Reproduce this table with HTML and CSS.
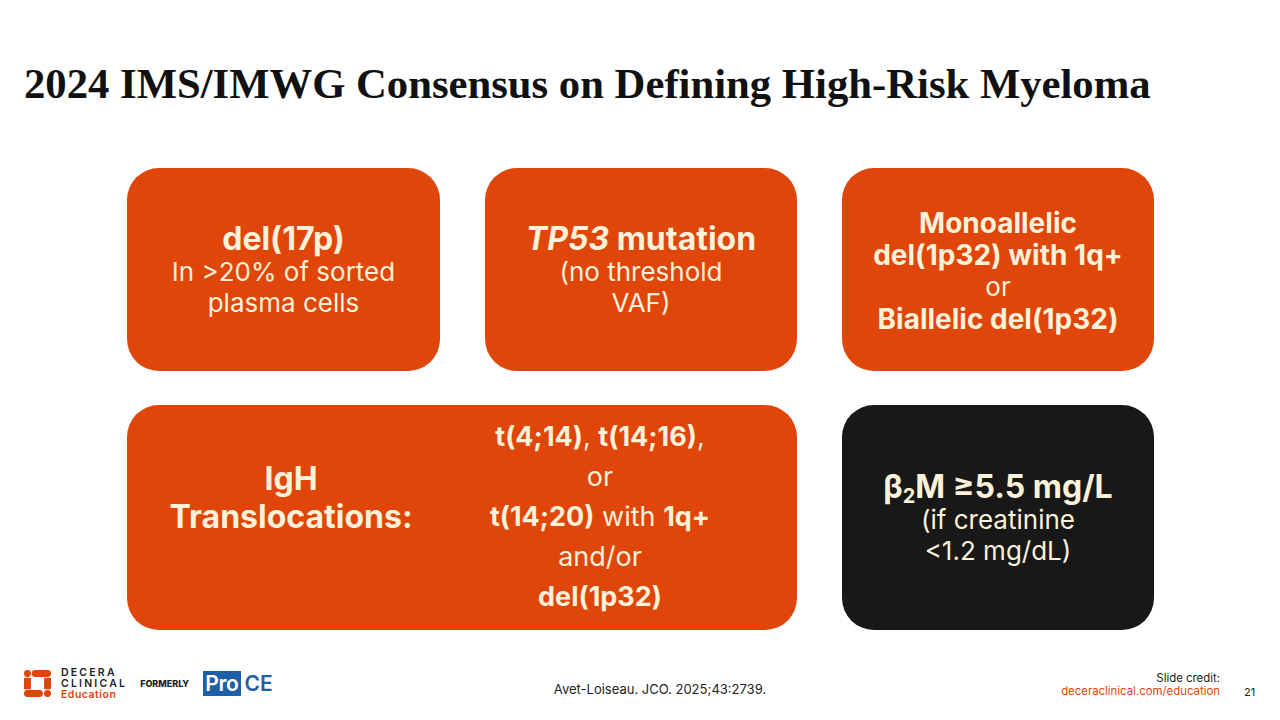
FILE: index.html
```html
<!DOCTYPE html>
<html lang="en">
<head>
<meta charset="utf-8">
<title>2024 IMS/IMWG Consensus on Defining High-Risk Myeloma</title>
<link rel="stylesheet" href="styles.css">
</head>
<body>
<div class="slide">
  <h1 class="title">2024 IMS/IMWG Consensus on Defining High-Risk Myeloma</h1>
  <div class="grid">
    <div class="card orange">
      <div class="big b">del(17p)</div>
      <div class="txt">In &gt;20% of sorted<br>plasma cells</div>
    </div>
    <div class="card orange">
      <div class="big b"><i>TP53</i> mutation</div>
      <div class="txt">(no threshold<br>VAF)</div>
    </div>
    <div class="card orange c3">
      <div class="mid b">Monoallelic</div>
      <div class="mid b">del(1p32) with 1q+</div>
      <div class="mid or">or</div>
      <div class="mid b">Biallelic del(1p32)</div>
    </div>
    <div class="card orange wide">
      <div class="igh big b">IgH<br>Translocations:</div>
      <div class="trans">
        <div><b>t(4;14)</b>, <b>t(14;16)</b>,</div>
        <div>or</div>
        <div><b>t(14;20)</b> with <b>1q+</b></div>
        <div>and/or</div>
        <div><b>del(1p32)</b></div>
      </div>
    </div>
    <div class="card dark">
      <div class="big b">β<sub>2</sub>M ≥5.5 mg/L</div>
      <div class="txt">(if creatinine<br>&lt;1.2 mg/dL)</div>
    </div>
  </div>
  <div class="footer">
    <div class="logos">
      <div class="decera">
        <svg class="mark" viewBox="0 0 28 28" width="27" height="27" aria-hidden="true">
          <circle cx="3.6" cy="3.6" r="3.6" fill="#E0450A"/>
          <rect x="8" y="0" width="20" height="7.2" rx="3.6" fill="#E0450A"/>
          <rect x="0" y="8" width="7.2" height="12" rx="1" fill="#E0450A"/>
          <rect x="20.8" y="8" width="7.2" height="12" rx="1" fill="#E0450A"/>
          <rect x="0" y="20.8" width="19.6" height="7.2" rx="3.6" fill="#E0450A"/>
          <circle cx="24.4" cy="24.4" r="3.6" fill="#E0450A"/>
        </svg>
        <div class="dtext">
          <span>DECERA</span>
          <span>CLINICAL</span>
          <span class="edu">Education</span>
        </div>
      </div>
      <span class="formerly">FORMERLY</span>
      <div class="proce"><span class="pro">Pro</span><span class="ce">CE</span></div>
    </div>
    <div class="cite">Avet-Loiseau. JCO. 2025;43:2739.</div>
    <div class="credit">
      <span>Slide credit:</span>
      <span class="url">deceraclinical.com/education</span>
    </div>
    <div class="page">21</div>
  </div>
</div>
</body>
</html>
```

FILE: styles.css
```css
* { box-sizing: border-box; }
html, body { margin: 0; padding: 0; background: #fff; }
.slide {
  width: 1280px;
  height: 720px;
  display: flex;
  flex-direction: column;
  font-family: Inter, "Noto Sans", sans-serif;
  overflow: hidden;
}
.title {
  margin: 0;
  padding: 58px 0 0 24px;
  font-family: "Liberation Serif", "Times New Roman", serif;
  font-weight: 700;
  font-size: 42.7px;
  line-height: 52px;
  color: #111;
  white-space: nowrap;
}
.grid {
  margin: 58px 0 0 127px;
  display: grid;
  grid-template-columns: 313px 312px 312px;
  grid-template-rows: 203px 225px;
  column-gap: 45px;
  row-gap: 34px;
}
.card {
  border-radius: 32px;
  display: flex;
  flex-direction: column;
  align-items: center;
  justify-content: center;
  text-align: center;
  color: #FCF1D9;
}
.orange { background: #E0450A; }
.dark { background: #181818; }
.wide {
  grid-column: 1 / span 2;
  flex-direction: row;
  justify-content: flex-start;
}
.b { font-weight: 700; }
.big { font-size: 32px; line-height: 34px; }
.txt { font-size: 26px; line-height: 31px; font-weight: 400; }
.mid { font-size: 28px; line-height: 32px; }
.mid.or { font-size: 26px; }
.c3 { padding-top: 2px; }
.igh {
  width: 328px;
  line-height: 38px;
  padding-bottom: 40px;
}
.trans {
  width: 290px;
  font-size: 27px;
  line-height: 40px;
  padding-bottom: 2px;
}
.trans b { font-weight: 700; }
sub { font-size: 0.62em; vertical-align: -0.25em; line-height: 0; }

.footer {
  margin-top: auto;
  height: 54px;
  display: flex;
  align-items: flex-start;
  padding-left: 24px;
}
.logos {
  display: flex;
  align-items: center;
  padding-top: 1px;
  width: 426px;
}
.decera { display: flex; align-items: center; gap: 10px; }
.mark { display: block; }
.dtext {
  display: flex;
  flex-direction: column;
  font-size: 10.5px;
  line-height: 11px;
  font-weight: 600;
  letter-spacing: 2.2px;
  color: #1e1e1e;
}
.dtext .edu { color: #E0450A; letter-spacing: 0.5px; }
.formerly {
  margin-left: 13px;
  font-size: 9px;
  font-weight: 800;
  color: #222;
}
.proce {
  margin-left: 14px;
  display: flex;
  align-items: center;
  font-size: 21px;
  font-weight: 600;
}
.pro {
  background: #1F5FAA;
  color: #fff;
  padding: 0 3px 0 2px;
  line-height: 25px;
  letter-spacing: -0.3px;
}
.ce { color: #1F5FAA; margin-left: 3px; }
.cite {
  padding-top: 15px;
  width: 420px;
  text-align: center;
  font-size: 13px;
  line-height: 16px;
  color: #222;
}
.credit {
  padding-top: 6px;
  width: 350px;
  display: flex;
  flex-direction: column;
  align-items: flex-end;
  font-size: 11.4px;
  line-height: 13px;
  color: #222;
}
.credit .url { color: #E0450A; }
.page {
  padding: 20px 0 0 24px;
  font-size: 11px;
  line-height: 12px;
  color: #222;
}
```
